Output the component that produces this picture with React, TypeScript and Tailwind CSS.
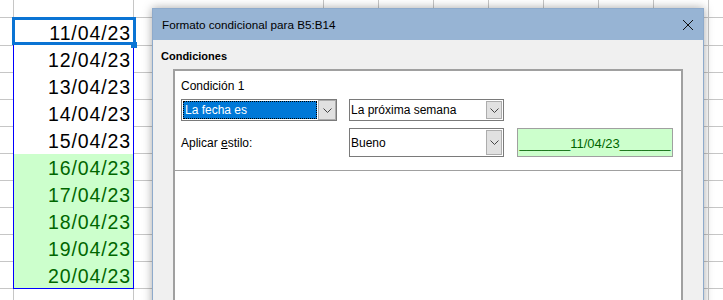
import React from "react";

const dates = [
  "11/04/23",
  "12/04/23",
  "13/04/23",
  "14/04/23",
  "15/04/23",
  "16/04/23",
  "17/04/23",
  "18/04/23",
  "19/04/23",
  "20/04/23",
];

const Chevron = () => (
  <svg width="9" height="5" viewBox="0 0 9 5">
    <path d="M0.5 0.5 L4.5 4.5 L8.5 0.5" fill="none" stroke="#444" strokeWidth="1" />
  </svg>
);

function GridRow({ h, date, green, first }: { h: string; date?: string; green?: boolean; first?: boolean }) {
  const cell = "border-r border-b border-[#c6c6c6] shrink-0";
  return (
    <div className={`flex ${h}`}>
      <div className={`${cell} w-[14px]`} />
      <div
        className={`flex w-[120px] shrink-0 items-end justify-end border-r border-[#c6c6c6] pr-[2px] pb-[3px] text-[19.5px] leading-[19px] tracking-[0.9px] ${
          first ? "border-b" : ""
        } ${green ? "bg-[#ccffcc] text-[#006600]" : "text-black"}`}
      >
        {date}
      </div>
      <div className={`${cell} w-[190px]`} />
      <div className={`${cell} w-[55px]`} />
      <div className={`${cell} w-[55px]`} />
      <div className={`${cell} w-[55px]`} />
      <div className={`${cell} w-[55px]`} />
      <div className={`${cell} w-[55px]`} />
      <div className={`${cell} w-[55px]`} />
      <div className={`${cell} w-[55px]`} />
      <div className={`${cell} w-[55px]`} />
    </div>
  );
}

export default function App() {
  return (
    <div
      className="relative h-[300px] w-[723px] overflow-hidden bg-white"
      style={{ fontFamily: '"Liberation Sans", Arial, sans-serif' }}
    >
      {/* Spreadsheet grid */}
      <div className="flex flex-col">
        <GridRow h="h-[18px]" first />
        {dates.map((d, i) => (
          <GridRow key={d} h={i === 0 ? "h-[28px]" : "h-[27px]"} date={d} green={i >= 5} />
        ))}
        <GridRow h="h-[20px]" />
      </div>

      {/* Range highlight */}
      <div className="absolute left-[13px] top-[18px] h-[271px] w-[121px] border border-[#0000ff]" />
      {/* Cell cursor */}
      <div className="absolute left-[12px] top-[17px] h-[28px] w-[124px] border-[3px] border-[#0a74d4]" />
      <div className="absolute left-[131px] top-[42px] h-[6px] w-[6px] bg-[#0a74d4]" />

      {/* Dialog */}
      <div className="absolute left-[152px] top-[8px] flex h-[310px] w-[552px] flex-col border border-[#8eaacb] bg-[#f0f0f0] shadow-[0_0_9px_rgba(0,0,0,0.35)] text-[12px] leading-[14px] text-black">
        <div className="flex h-[31px] shrink-0 items-center justify-between bg-[#97b4d4] pl-[9px] pr-[10px]">
          <span className="text-[11.7px]">Formato condicional para B5:B14</span>
          <svg width="10" height="10" viewBox="0 0 10 10">
            <path d="M0 0 L10 10 M10 0 L0 10" stroke="#111" strokeWidth="1" fill="none" />
          </svg>
        </div>
        <div className="flex flex-1 flex-col">
          <div className="pl-[8px] pt-[9px] text-[11px] font-bold">Condiciones</div>
          <div className="mx-[20px] mt-[6px] flex-1 border-2 border-[#a0a0a0] bg-white">
            <div className="border-b border-[#a0a0a0] pb-[13px] pl-[6px] pt-[8px]">
              <div>Condición 1</div>
              <div className="mt-[6px] flex gap-[12px]">
                <div className="flex h-[22px] w-[156px] border border-[#7a7a7a] bg-white">
                  <div className="m-px flex flex-1 items-center border border-dotted border-black bg-[#0078d7] pl-px text-white">
                    La fecha es
                  </div>
                  <div className="flex w-[18px] items-center justify-center border border-[#adadad] bg-[#e1e1e1]">
                    <Chevron />
                  </div>
                </div>
                <div className="flex h-[22px] w-[155px] border border-[#7a7a7a] bg-white">
                  <div className="flex flex-1 items-center pl-[1px]">La próxima semana</div>
                  <div className="my-px mr-px flex w-[16px] items-center justify-center border border-[#adadad] bg-[#e1e1e1]">
                    <Chevron />
                  </div>
                </div>
              </div>
              <div className="mt-[7px] flex items-center">
                <div className="w-[168px]">
                  Aplicar <span className="underline">e</span>stilo:
                </div>
                <div className="flex h-[29px] w-[155px] border border-[#7a7a7a] bg-white">
                  <div className="flex flex-1 items-center pl-[1px]">Bueno</div>
                  <div className="my-px mr-px flex w-[16px] items-center justify-center border border-[#adadad] bg-[#e1e1e1]">
                    <Chevron />
                  </div>
                </div>
                <div className="ml-[13px] flex h-[29px] w-[156px] items-center justify-center border border-[#a0a0a0] bg-[#ccffcc] pt-[2px] text-[13px] text-[#006600]">
                  _______11/04/23_______
                </div>
              </div>
            </div>
          </div>
        </div>
      </div>
    </div>
  );
}
